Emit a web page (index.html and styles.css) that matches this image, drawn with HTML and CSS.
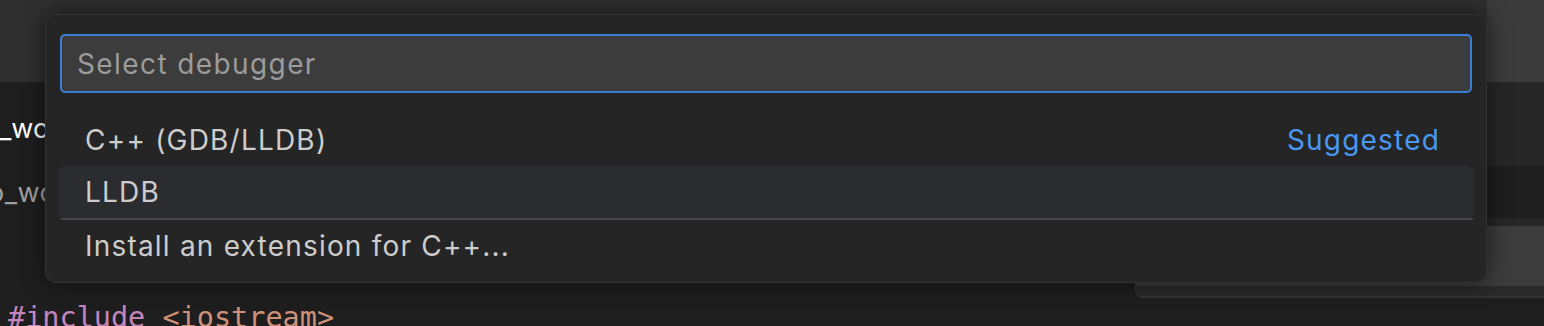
FILE: index.html
```html
<!DOCTYPE html>
<html lang="en">
<head>
<meta charset="utf-8">
<title>Select debugger</title>
<link rel="stylesheet" href="styles.css">
</head>
<body>
<div class="workbench">
  <div class="titlebar">
    <div class="titlebar-left"></div>
    <div class="titlebar-right"></div>
  </div>
  <div class="editor">
    <div class="tab-row"><span class="tab-label">_world.cpp</span></div>
    <div class="crumb-row"><span class="crumb">o_world.cpp</span></div>
    <div class="code">
      <div class="code-line"><span class="tok-directive">#include</span> <span class="tok-string">&lt;iostream&gt;</span></div>
    </div>
  </div>
</div>

<div class="side-widget">
  <div class="sw-head"></div>
  <div class="sw-strip"></div>
  <div class="sw-gap"></div>
  <div class="sw-field"></div>
  <div class="sw-foot"></div>
</div>

<div class="quick-pick">
  <div class="qp-input-wrap">
    <input class="qp-input" type="text" placeholder="Select debugger">
  </div>
  <div class="qp-list">
    <div class="qp-row">
      <span class="qp-label">C++ (GDB/LLDB)</span>
      <span class="qp-detail">Suggested</span>
    </div>
    <div class="qp-row is-focused">
      <span class="qp-label">LLDB</span>
    </div>
    <div class="qp-row has-separator">
      <span class="qp-label">Install an extension for C++...</span>
    </div>
  </div>
</div>
</body>
</html>
```

FILE: styles.css
```css
* { box-sizing: border-box; }

html, body {
  margin: 0;
  padding: 0;
}

body {
  width: 1544px;
  height: 326px;
  overflow: hidden;
  background: #1c1c1c;
  font-family: Inter, "Noto Sans", sans-serif;
  position: relative;
}

.workbench {
  display: flex;
  flex-direction: column;
  height: 326px;
}

.titlebar {
  height: 82px;
  flex-shrink: 0;
  display: flex;
}

.titlebar-left {
  flex: 1;
  background: #2f2f2f;
}

.titlebar-right {
  width: 57px;
  background: #3b3b3b;
}

.editor {
  flex: 1;
  min-height: 0;
  overflow: hidden;
  background: #1e1e1e;
  display: flex;
  flex-direction: column;
}

.tab-row {
  height: 84px;
  flex-shrink: 0;
  display: flex;
  align-items: center;
  padding-top: 8px;
  overflow: hidden;
}

.tab-label {
  margin-left: -1px;
  font-size: 27px;
  color: #ffffff;
  white-space: nowrap;
}

.crumb-row {
  height: 52px;
  flex-shrink: 0;
  display: flex;
  align-items: center;
  overflow: hidden;
}

.crumb {
  margin-left: -12px;
  font-size: 27px;
  letter-spacing: 0.5px;
  color: #a0a0a0;
  white-space: nowrap;
}

.code {
  flex-shrink: 0;
  padding-top: 80px;
  padding-left: 8px;
}

.code-line {
  font-family: "DejaVu Sans Mono", "Liberation Mono", monospace;
  font-size: 28.5px;
  line-height: 40px;
  white-space: pre;
}

.tok-directive { color: #c586c0; }
.tok-string { color: #ce9178; }

/* right-hand widget partly covered by the quick pick */
.side-widget {
  position: absolute;
  left: 1135px;
  top: 82px;
  right: 0;
  height: 216px;
  display: flex;
  flex-direction: column;
  border-left: 1px solid #353535;
  border-bottom: 2px solid #333333;
  border-bottom-left-radius: 8px;
  overflow: hidden;
}

.sw-head { height: 84px; background: #262626; }
.sw-strip { height: 52px; background: #1e1e1e; }
.sw-gap { height: 8px; background: #262626; }
.sw-field { height: 60px; background: #3c3c3c; }
.sw-foot { flex: 1; background: #2a2a2a; }

/* quick pick */
.quick-pick {
  position: absolute;
  left: 45px;
  top: 14px;
  width: 1442px;
  height: 269px;
  background: #252525;
  border: 1px solid #333333;
  border-radius: 11px;
  padding: 19px 14px 10px;
  box-shadow: 0 0 22px rgba(0, 0, 0, 0.55);
  display: flex;
  flex-direction: column;
}

.qp-input-wrap {
  display: flex;
}

.qp-input {
  width: 100%;
  height: 59px;
  margin: 0;
  background: #3c3c3c;
  border: 2px solid #3a7fd6;
  border-radius: 5px;
  padding: 0 15px;
  font-family: Inter, "Noto Sans", sans-serif;
  font-size: 28px;
  letter-spacing: 1.4px;
  color: #cccccc;
  outline: none;
}

.qp-input::placeholder {
  color: #9b9b9b;
}

.qp-list {
  margin: 21px -2px 0 -2px;
  display: flex;
  flex-direction: column;
}

.qp-row {
  height: 52px;
  display: flex;
  align-items: center;
  justify-content: space-between;
  padding: 0 34px 0 27px;
  border-radius: 7px;
  font-size: 28px;
  letter-spacing: 1.2px;
  color: #cccccc;
}

.qp-row.is-focused {
  background: #2b2c30;
}

.qp-row.has-separator {
  height: 54px;
  margin: 0 1px 0 3px;
  padding-left: 24px;
  border-top: 2px solid #45454a;
  border-radius: 0;
}

.qp-detail {
  color: #4a97f0;
}
```
